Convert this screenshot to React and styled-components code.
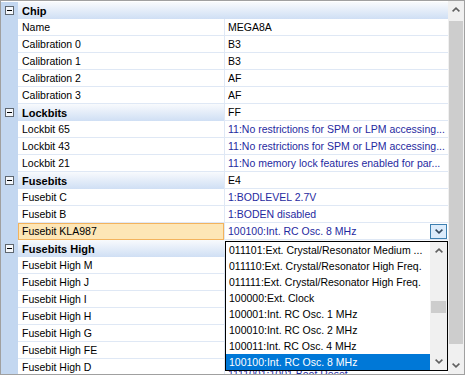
import React from 'react';
import styled, { createGlobalStyle, css } from 'styled-components';

const GlobalStyle = createGlobalStyle`
  html, body { margin: 0; padding: 0; background: #fff; }
  body { font-family: "Liberation Sans", Arial, sans-serif; font-size: 10.5px; color: #000; }
`;

const LINE = '#dfe8f5';

// values of the rows hidden behind the open list are left out
const rows = [
  { cat: 'Chip' },
  { name: 'Name', value: 'MEGA8A' },
  { name: 'Calibration 0', value: 'B3' },
  { name: 'Calibration 1', value: 'B3' },
  { name: 'Calibration 2', value: 'AF' },
  { name: 'Calibration 3', value: 'AF' },
  { cat: 'Lockbits', value: 'FF' },
  { name: 'Lockbit 65', value: '11:No restrictions for SPM or LPM accessing...', blue: true },
  { name: 'Lockbit 43', value: '11:No restrictions for SPM or LPM accessing...', blue: true },
  { name: 'Lockbit 21', value: '11:No memory lock features enabled for par...', blue: true },
  { cat: 'Fusebits', value: 'E4' },
  { name: 'Fusebit C', value: '1:BODLEVEL 2.7V', blue: true },
  { name: 'Fusebit B', value: '1:BODEN disabled', blue: true },
  { name: 'Fusebit KLA987', value: '100100:Int. RC Osc. 8 MHz', blue: true, selected: true },
  { cat: 'Fusebits High' },
  { name: 'Fusebit High M' },
  { name: 'Fusebit High J' },
  { name: 'Fusebit High I' },
  { name: 'Fusebit High H' },
  { name: 'Fusebit High G' },
  { name: 'Fusebit High FE' },
  { name: 'Fusebit High D', value: '1111001:1001 Boot Reset', blue: true, low: true },
];

const options = [
  '011101:Ext. Crystal/Resonator Medium ...',
  '011110:Ext. Crystal/Resonator High Freq.',
  '011111:Ext. Crystal/Resonator High Freq.',
  '100000:Ext. Clock',
  '100001:Int. RC Osc. 1 MHz',
  '100010:Int. RC Osc. 2 MHz',
  '100011:Int. RC Osc. 4 MHz',
  '100100:Int. RC Osc. 8 MHz',
];

const Chevron = ({ up, color = '#606060' }) => (
  <svg width="8" height="5" viewBox="0 0 8 5">
    <polyline
      points={up ? '0.6,4.4 4,1.2 7.4,4.4' : '0.6,0.6 4,3.8 7.4,0.6'}
      fill="none"
      stroke={color}
      strokeWidth="1.6"
    />
  </svg>
);

const MinusBox = () => (
  <svg width="9" height="9" viewBox="0 0 9 9">
    <rect x="0.5" y="0.5" width="8" height="8" fill="#f4f7fb" stroke="#5f6770" />
    <line x1="2" y1="4.5" x2="7" y2="4.5" stroke="#000" />
  </svg>
);

const PropertyRow = ({ row }) => {
  if (row.cat) {
    return (
      <Row>
        <Gutter><MinusBox /></Gutter>
        <CatCell $wide={!row.value}>{row.cat}</CatCell>
        {row.value && <ValueCell><ValueText>{row.value}</ValueText></ValueCell>}
      </Row>
    );
  }
  return (
    <Row>
      <Gutter />
      <NameCell $selected={row.selected}>{row.name}</NameCell>
      <ValueCell>
        <ValueText $blue={row.blue} $low={row.low}>{row.value}</ValueText>
        {row.selected && (
          <DropButton><Chevron color="#34495e" /></DropButton>
        )}
      </ValueCell>
    </Row>
  );
};

export default function App() {
  return (
    <>
      <GlobalStyle />
      <Frame>
        <Grid>
          {rows.map((r, i) => <PropertyRow key={i} row={r} />)}
        </Grid>
        <ScrollBar>
          <ArrowBox><Chevron up /></ArrowBox>
          <Track><Thumb $h={323} $top={3} /></Track>
          <ArrowBox><Chevron /></ArrowBox>
        </ScrollBar>
        <DropList>
          <Items>
            {options.map((o, i) => (
              <Item key={i} $active={i === options.length - 1}>{o}</Item>
            ))}
          </Items>
          <ListScroll>
            <ArrowBox><Chevron up /></ArrowBox>
            <Track><Thumb $h={12} $top={42} /></Track>
            <ArrowBox><Chevron /></ArrowBox>
          </ListScroll>
        </DropList>
      </Frame>
    </>
  );
}

const Frame = styled.div`
    position: relative;
    box-sizing: border-box;
    width: 465px;
    height: 375px;
    border: 1px solid #a0a0a0;
    display: flex;
    overflow: hidden;
    background: #fff;
`;

const Grid = styled.div`
    flex: 1;
    min-width: 0;
    padding-top: 1px;
    overflow: hidden;
`;

const Row = styled.div`
    display: flex;
    height: 17px;
`;

const Gutter = styled.div`
    width: 17px;
    flex: none;
    background: #c3d7f0;
    display: flex;
    align-items: center;
    justify-content: center;
`;

const NameCell = styled.div`
    box-sizing: border-box;
    width: 206px;
    flex: none;
    height: 17px;
    padding: 0 4px;
    line-height: 17px;
    border-bottom: 1px solid ${LINE};
    white-space: nowrap;
    overflow: hidden;
    ${p => p.$selected && css`
        background: #fde6b6;
        border: 1px solid #f3b35d;
        padding: 0 3px;
        line-height: 15px;
    `}
`;

const CatCell = styled.div`
    box-sizing: border-box;
    ${p => p.$wide ? 'flex: 1;' : 'width: 206px; flex: none;'}
    height: 17px;
    padding: 0 4px;
    line-height: 18px;
    font-weight: bold;
    font-size: 11px;
    background: linear-gradient(to bottom, #f8fafd 0%, #e6eef9 45%, #cfdff4 100%);
`;

const ValueCell = styled.div`
    box-sizing: border-box;
    flex: 1;
    min-width: 0;
    height: 17px;
    display: flex;
    align-items: center;
    padding-left: 3px;
    padding-right: 1px;
    border-left: 1px solid ${LINE};
    border-bottom: 1px solid ${LINE};
`;

const ValueText = styled.span`
    flex: 1;
    min-width: 0;
    white-space: nowrap;
    overflow: hidden;
    line-height: 17px;
    color: ${p => p.$blue ? '#1f2a9f' : '#000'};
    ${p => p.$low && 'align-self: flex-start; margin-top: 7px;'}
`;

const DropButton = styled.div`
    box-sizing: border-box;
    width: 17px;
    height: 15px;
    flex: none;
    display: flex;
    align-items: center;
    justify-content: center;
    background: #dcecfc;
    border: 1px solid #3c7fb1;
`;

const ScrollBar = styled.div`
    width: 16px;
    flex: none;
    background: #f0f0f0;
    display: flex;
    flex-direction: column;
`;

const ArrowBox = styled.div`
    height: 17px;
    flex: none;
    display: flex;
    align-items: center;
    justify-content: center;
`;

const Track = styled.div`
    flex: 1;
    display: flex;
    flex-direction: column;
`;

const Thumb = styled.div`
    height: ${p => p.$h}px;
    margin: ${p => p.$top}px 1px 0;
    background: #cdcdcd;
`;

const DropList = styled.div`
    position: absolute;
    left: 224px;
    top: 240px;
    box-sizing: border-box;
    width: 223px;
    height: 130px;
    border: 1px solid #000;
    background: #fff;
    display: flex;
`;

const Items = styled.div`
    flex: 1;
    min-width: 0;
`;

const Item = styled.div`
    height: 16px;
    line-height: 17px;
    padding-left: 3px;
    white-space: nowrap;
    overflow: hidden;
    ${p => p.$active && css`
        background: #0078d7;
        color: #fff;
    `}
`;

const ListScroll = styled.div`
    width: 17px;
    flex: none;
    background: #f0f0f0;
    display: flex;
    flex-direction: column;
`;
